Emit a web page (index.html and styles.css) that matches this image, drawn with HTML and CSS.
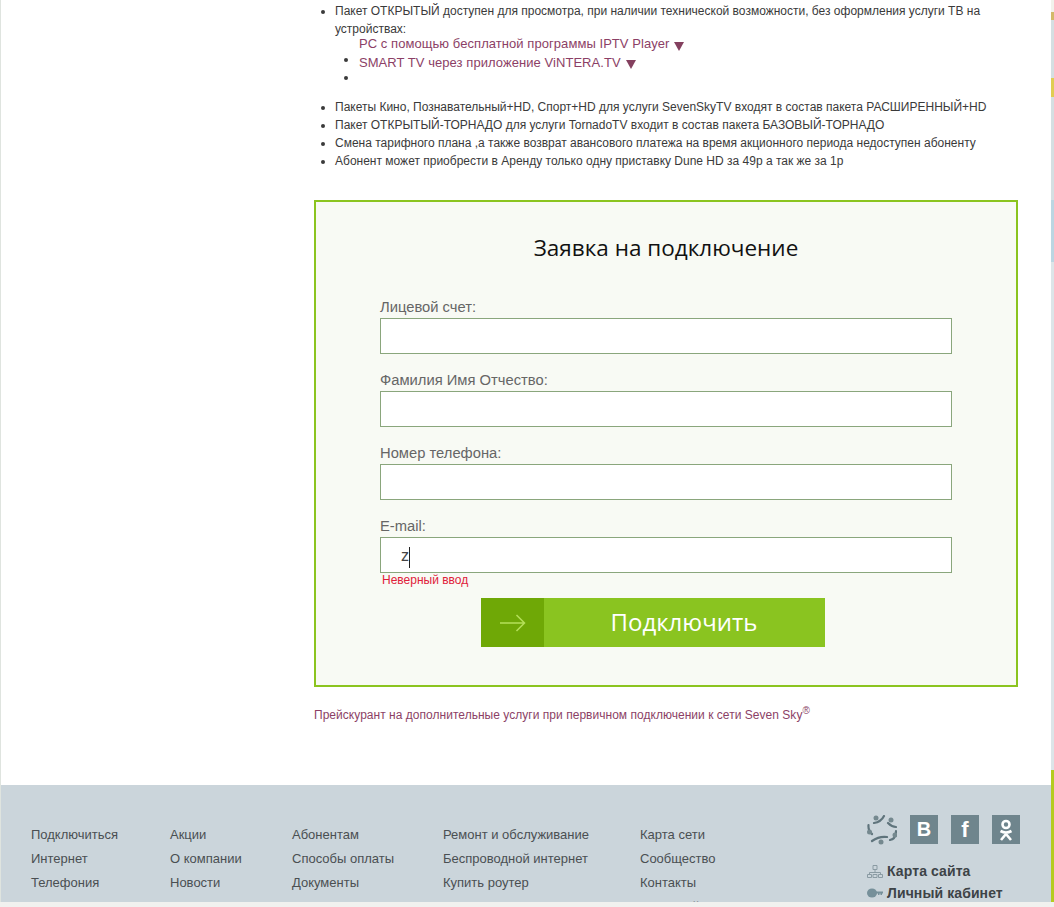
FILE: index.html
```html
<!DOCTYPE html>
<html lang="ru">
<head>
<meta charset="utf-8">
<title>Заявка на подключение</title>
<link rel="stylesheet" href="styles.css">
</head>
<body>
<div class="frame">
  <div class="content">
    <main class="main">
      <ul class="notes">
        <li>Пакет ОТКРЫТЫЙ доступен для просмотра, при наличии технической возможности, без оформления услуги ТВ на устройствах:
          <ul class="sub">
            <li class="sub-first"><a href="#">PC с помощью бесплатной программы IPTV Player</a><span class="tri"></span></li>
            <li><a href="#">SMART TV через приложение ViNTERA.TV</a><span class="tri"></span></li>
            <li></li>
          </ul>
        </li>
        <li>Пакеты Кино, Познавательный+HD, Спорт+HD для услуги SevenSkyTV входят в состав пакета РАСШИРЕННЫЙ+HD</li>
        <li>Пакет ОТКРЫТЫЙ-ТОРНАДО для услуги TornadoTV входит в состав пакета БАЗОВЫЙ-ТОРНАДО</li>
        <li>Смена тарифного плана ,а также возврат авансового платежа на время акционного периода недоступен абоненту</li>
        <li>Абонент может приобрести в Аренду только одну приставку Dune HD за 49р а так же за 1р</li>
      </ul>
      <form class="order">
        <h2 class="order-title">Заявка на подключение</h2>
        <div class="field">
          <label class="field-label" for="f1">Лицевой счет:</label>
          <input class="field-input" id="f1" type="text">
        </div>
        <div class="field">
          <label class="field-label" for="f2">Фамилия Имя Отчество:</label>
          <input class="field-input" id="f2" type="text">
        </div>
        <div class="field">
          <label class="field-label" for="f3">Номер телефона:</label>
          <input class="field-input" id="f3" type="text">
        </div>
        <div class="field field-last">
          <label class="field-label" for="f4">E-mail:</label>
          <div class="input-wrap">
            <input class="field-input" id="f4" type="text" value="z">
            <span class="caret"></span>
          </div>
          <div class="field-error">Неверный ввод</div>
        </div>
        <button class="submit" type="button">
          <span class="submit-icon">
            <svg width="26" height="18" viewBox="0 0 26 18" fill="none" stroke="#b5e05a" stroke-width="1.5"><path d="M0 9h24.5M16.500 1l8 8-8 8"/></svg>
          </span>
          <span class="submit-text">Подключить</span>
        </button>
      </form>
      <p class="price"><a href="#">Прейскурант на дополнительные услуги при первичном подключении к сети Seven Sky<sup>®</sup></a></p>
    </main>
    <footer class="footer">
      <ul class="fcol fcol-1"><li>Подключиться</li><li>Интернет</li><li>Телефония</li></ul>
      <ul class="fcol fcol-2"><li>Акции</li><li>О компании</li><li>Новости</li></ul>
      <ul class="fcol fcol-3"><li>Абонентам</li><li>Способы оплаты</li><li>Документы</li></ul>
      <ul class="fcol fcol-4"><li>Ремонт и обслуживание</li><li>Беспроводной интернет</li><li>Купить роутер</li></ul>
      <ul class="fcol fcol-5"><li>Карта сети</li><li>Сообщество</li><li>Контакты</li><li>Бонусный платёж</li></ul>
      <div class="fside">
        <div class="social">
          <svg class="star" width="30" height="30" viewBox="0 0 30 30" fill="none" stroke="#5f747c" stroke-width="2.2" stroke-linecap="round">
            <path d="M17 1Q14 7 7 8M1.500 10Q1 16 5 19M5 26Q12 21 20 22M23 25Q29 24 29 16M21 8Q25 12 29 12"/>
            <g fill="#75898f" stroke="none">
              <circle cx="9" cy="3" r="2.500"/>
              <circle cx="24" cy="5" r="2.500"/>
              <circle cx="2.500" cy="17" r="2.500"/>
              <circle cx="28" cy="20" r="2.500"/>
              <circle cx="14" cy="27" r="2.500"/>
            </g>
          </svg>
          <span class="sq sq-v">В</span>
          <span class="sq sq-f">f</span>
          <span class="sq sq-o">
            <svg width="14" height="22" viewBox="0 0 14 22" fill="none" stroke="#fff" stroke-width="2.600"><circle cx="7" cy="5.500" r="3.500"/><path d="M1.500 12c3.500 2 7.500 2 11 0M7 14v1M2 21l5-6 5 6"/></svg>
          </span>
        </div>
        <div class="flink">
          <svg width="16" height="13" viewBox="0 0 16 13" fill="none" stroke="#8a9ba3"><path d="M6 .5h4v4H6zM8 4.500v3M2.500 9.500v-2h11v2M.5 9.500h4v3h-4zM6 9.500h4v3H6zM11.500 9.500h4v3h-4z"/></svg>
          <span>Карта сайта</span>
        </div>
        <div class="flink">
          <svg width="16" height="10" viewBox="0 0 16 10" fill="#76909a"><ellipse cx="5" cy="5" rx="5" ry="4.500"/><path d="M8 3.500h8v2h-1v1.500h-1.500v-1.500h-1v1.500H11V5.500H8z"/></svg>
          <span>Личный кабинет</span>
        </div>
      </div>
    </footer>
  </div>
  <div class="strip"></div>
</div>
<div class="bottom"></div>
</body>
</html>
```
FILE: styles.css
```css
* { box-sizing: border-box; }
html, body { margin: 0; padding: 0; height: 907px; overflow: hidden; background: #fff; }
body { font-family: "Liberation Sans", Arial, sans-serif; color: #333; }
a { color: #8c3f66; text-decoration: none; }

.frame { display: flex; height: 902px; overflow: hidden; }
.content { flex: 1; min-width: 0; display: flex; flex-direction: column; border-left: 1px solid #dfe4df; }
.strip {
  width: 3px;
  background: linear-gradient(#f2f2ec 0 12px, #d2b96a 12px 20px, #d5dfe2 20px 78px, #e0cd52 78px 97px, #d5dfe2 97px 200px, #bcd6e2 200px 262px, #dde5e8 262px 770px, #b4cb20 770px 902px);
}
.bottom { height: 5px; background: #f1f1ef; }

.main { height: 785px; flex: none; padding-left: 313px; padding-right: 33px; }

.notes { margin: 0; padding: 2px 0 0 21px; font-size: 12px; line-height: 18px; color: #3a3a3a; }
.sub { margin: 0 0 11px; padding-left: 24px; font-size: 13px; letter-spacing: 0.06px; line-height: 18px; list-style-type: disc; }
.sub li { height: 18px; }
.sub .sub-first { list-style: none; height: 13px; }
.sub a { position: relative; top: 3px; }
.sub .sub-first a { top: -3px; }
.tri { display: inline-block; width: 0; height: 0; margin-left: 5px; border-left: 5px solid transparent; border-right: 5px solid transparent; border-top: 9px solid #84405f; position: relative; top: 5px; }
.sub-first .tri { top: 0; }

.order { margin-top: 30px; height: 487px; border: 2px solid #8bc41f; background: #f8faf4; padding: 30px 64px 0; }
.order-title { margin: 0 0 35px; text-align: center; font-family: "Open Sans", sans-serif; font-weight: 500; font-size: 22.500px; line-height: 32px; color: #111; }
.field { margin-bottom: 18px; height: 55px; }
.field-last { margin-bottom: 0; height: auto; }
.field-label { display: block; font-size: 14.750px; line-height: 17px; color: #666; height: 19px; }
.field-input { display: block; width: 100%; height: 36px; border: 1px solid #8aa67c; background: #fff; padding: 2px 20px 0; font-family: inherit; font-size: 16px; color: #444; outline: none; border-radius: 0; }
.input-wrap { position: relative; }
.caret { position: absolute; left: 29px; top: 10px; width: 1px; height: 21px; background: #222; }
.field-error { margin: 0 0 0 2px; font-size: 12px; line-height: 14px; color: #e0203a; }
.submit { display: flex; margin: 11px 0 0 101px; padding: 0; width: 344px; height: 49px; border: 0; background: #8ac420; color: #fff; font-family: "Open Sans", sans-serif; cursor: pointer; }
.submit-icon { width: 63px; height: 49px; background: #6fa806; display: flex; align-items: center; justify-content: center; }
.submit-text { flex: 1; text-align: center; font-size: 24px; font-weight: 500; line-height: 47px; padding-right: 1px; }

.price { margin: 19px 0 0; font-size: 12px; line-height: 18px; letter-spacing: 0.03px; }
.price sup { font-size: 10px; line-height: 0; }

.footer { display: flex; height: 130px; flex: none; background: #cbd5db; padding: 38px 0 0 30px; font-size: 13px; color: #4a4f52; }
.fcol { list-style: none; margin: 0; padding: 0; line-height: 24px; }
.fcol-1 { width: 139px; }
.fcol-2 { width: 122px; }
.fcol-3 { width: 151px; }
.fcol-4 { width: 197px; }
.fcol-5 { width: 227px; }
.fside { margin-top: -8px; }
.social { display: flex; align-items: flex-start; gap: 13px; height: 45px; }
.sq { width: 28px; height: 29px; background: #6f858d; color: #fff; font-weight: 700; display: flex; align-items: center; justify-content: center; font-size: 20px; }
.sq-f { font-size: 22px; }
.flink { display: flex; align-items: center; gap: 4px; height: 22px; font-size: 14px; font-weight: 700; color: #3d4347; letter-spacing: 0.1px; }
.flink svg { flex: none; }
```
